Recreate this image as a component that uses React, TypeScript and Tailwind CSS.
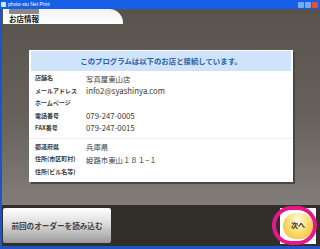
const rows1 = [
  { label: '店舗名', value: '写真屋東山店', big: true },
  { label: 'メールアドレス', value: 'info2@syashinya.com' },
  { label: 'ホームページ', value: '' },
  { label: '電話番号', value: '079-247-0005' },
  { label: 'FAX番号', value: '079-247-0015' },
];

const rows2 = [
  { label: '都道府県', value: '兵庫県', big: true },
  { label: '住所(市区町村)', value: '姫路市東山１８１−１', big: true },
  { label: '住所(ビル名等)', value: '' },
];

function Row({ label, value, big }: { label: string; value: string; big?: boolean }) {
  return (
    <div className="flex h-[12.5px] items-center">
      <span className="w-[51px] shrink-0 text-[6px] font-bold leading-none text-[#3a3a3a]">{label}</span>
      <span className={`${big ? 'text-[7.4px]' : 'text-[7.8px]'} leading-none text-[#3c3c3c]`}>{value}</span>
    </div>
  );
}

export default function App() {
  return (
    <div className="flex h-[249px] w-[320px] flex-col overflow-hidden font-['Noto_Sans_CJK_JP','Noto_Sans',sans-serif]">
      {/* XP title bar */}
      <div className="flex h-[9px] shrink-0 items-center gap-[2px] bg-[#1560e6] pl-[1px] pr-[2px]">
        <div className="h-[5px] w-[5px] shrink-0 rounded-[1px] bg-[#d7e6f8]" />
        <div className="font-['Liberation_Sans',sans-serif] text-[5px] leading-none text-white">photo-stu Net Print</div>
        <div className="ml-auto flex gap-[1px]">
          <div className="h-[6px] w-[6px] rounded-[1px] bg-[#7aa7f5]" />
          <div className="h-[6px] w-[6px] rounded-[1px] bg-[#7aa7f5]" />
          <div className="h-[6px] w-[6px] rounded-[1px] bg-[#e2542a]" />
        </div>
      </div>

      {/* window body */}
      <div className="flex flex-1 flex-col border-l-2 border-[#1d54c8] bg-[linear-gradient(180deg,#58534d_0%,#66615b_45%,#908c88_100%)]">
        {/* header tab */}
        <div className="flex h-[15px] shrink-0">
          <div className="ml-[1px] flex w-[120px] flex-col rounded-tr-[14px] bg-[linear-gradient(180deg,#f2f2f2,#ffffff)] pl-[6px]">
            <div className="h-[5px] w-[30px] rounded-[1px] bg-[#8a8a8a]" />
            <span className="mt-[1px] text-[7.5px] font-bold leading-none text-[#111]">お店情報</span>
          </div>
        </div>

        {/* info card */}
        <div className="ml-[27px] mt-[26px] w-[264px] shrink-0 bg-white px-[2px] pt-[1px] pb-[4px] shadow-[2px_2px_0_#4a4642]">
          <div className="flex h-[20px] items-center justify-center bg-[#cfe3fa] text-[7.4px] font-bold text-[#2b5fa5]">
            このプログラムは以下のお店と接続しています。
          </div>
          <div className="mt-[1px] pl-[4px]">
            {rows1.map((r) => (
              <Row key={r.label} {...r} />
            ))}
          </div>
          <div className="mx-[-2px] mt-[3px] h-[1px] bg-[#eeeeee]" />
          <div className="mt-[2px] pl-[4px]">
            {rows2.map((r) => (
              <Row key={r.label} {...r} />
            ))}
          </div>
        </div>

        {/* bottom bar */}
        <div className="mt-auto flex h-[41px] shrink-0 items-center bg-[#322e2a] pl-[1px] pr-[2px]">
          <button className="flex h-[35px] w-[108px] items-center justify-center rounded-[2px] bg-[linear-gradient(180deg,#ffffff_0%,#dcdcdc_45%,#9a9a9a_100%)] text-[7.6px] font-bold text-[#444]">
            前回のオーダーを読み込む
          </button>
          <div className="relative ml-auto mr-[2px] flex h-[36px] w-[36px] items-center justify-center bg-white">
            <div className="flex h-[26px] w-[30px] items-center justify-center rounded-full bg-[radial-gradient(ellipse_at_50%_25%,#fffbe6_0%,#fbe07a_45%,#f2b124_100%)] text-[7px] font-bold text-[#333]">
              次へ
            </div>
            <div className="absolute left-[-8px] top-[-2px] h-[39px] w-[45px] rounded-full border-[4px] border-[#e8168a]" />
          </div>
        </div>
        <div className="h-[3px] shrink-0 bg-[#1d54c8]" />
      </div>
    </div>
  );
}
